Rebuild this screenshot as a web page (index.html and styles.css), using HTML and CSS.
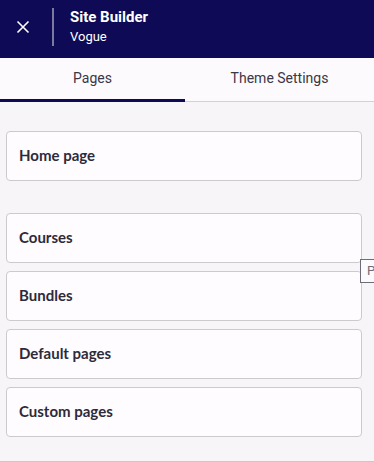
FILE: index.html
```html
<!DOCTYPE html>
<html lang="en">
<head>
    <meta charset="UTF-8">
    <meta name="viewport" content="width=device-width, initial-scale=1.0">
    <title>Site Builder</title>
    <link rel="stylesheet" href="styles.css">
</head>
<body>
    <div id="builder">
        <header id="top-bar">
            <button id="close-btn" aria-label="Close">
                <svg width="14" height="14" viewBox="0 0 14 14">
                    <path d="M1.5 1.5 L12.5 12.5 M12.5 1.5 L1.5 12.5" stroke="#ffffff" stroke-width="1.6" fill="none"/>
                </svg>
            </button>
            <div class="divider"></div>
            <div class="site-info">
                <div class="site-title">Site Builder</div>
                <div class="site-name">Vogue</div>
            </div>
        </header>

        <nav id="tabs">
            <div class="tab active">Pages</div>
            <div class="tab">Theme Settings</div>
        </nav>

        <main id="page-list">
            <div class="page-group">
                <div class="page-item">Home page</div>
            </div>
            <div class="page-group">
                <div class="page-item">Courses</div>
                <div class="page-item">Bundles</div>
                <div class="page-item">Default pages</div>
                <div class="page-item">Custom pages</div>
            </div>
            <div id="tooltip">P</div>
        </main>
    </div>
</body>
</html>
```

FILE: styles.css
```css
body {
    margin: 0;
    background-color: #f7f5f8;
    font-family: 'Roboto', sans-serif;
    color: #2d2a3a;
}

#builder {
    width: 374px;
    height: 462px;
    display: flex;
    flex-direction: column;
    overflow: hidden;
    box-sizing: border-box;
    border-bottom: 1px solid #c9c7cc;
}

/* Header */
#top-bar {
    display: flex;
    align-items: center;
    height: 58px;
    background-color: #0f0a55;
    color: #ffffff;
}

#close-btn {
    width: 46px;
    height: 58px;
    padding: 0 0 4px 0;
    background: transparent;
    border: none;
    display: flex;
    align-items: center;
    justify-content: center;
    cursor: pointer;
}

.divider {
    width: 2px;
    height: 38px;
    margin: 0 16px 4px 6px;
    background-color: #7c7a9c;
}

.site-info {
    display: flex;
    flex-direction: column;
    gap: 3px;
    margin-bottom: 4px;
}

.site-title {
    font-size: 15px;
    font-weight: bold;
    line-height: 17px;
}

.site-name {
    font-size: 13px;
    line-height: 16px;
}

/* Tabs */
#tabs {
    display: flex;
    height: 44px;
    background-color: #fcfafc;
    border-bottom: 1px solid #d3d1d6;
    box-sizing: border-box;
}

.tab {
    flex: 1;
    display: flex;
    align-items: center;
    justify-content: center;
    padding-bottom: 4px;
    font-size: 14px;
    color: #3a3748;
    box-sizing: border-box;
}

.tab.active {
    flex: 0 0 185px;
    border-bottom: 3px solid #0f0a55;
    margin-bottom: -1px;
    padding-bottom: 1px;
}

/* Page list */
#page-list {
    position: relative;
    display: flex;
    flex-direction: column;
    gap: 32px;
    padding: 29px 12px 0 6px;
}

.page-group {
    display: flex;
    flex-direction: column;
    gap: 8px;
}

.page-item {
    height: 50px;
    box-sizing: border-box;
    display: flex;
    align-items: center;
    padding: 0 12px 2px;
    background-color: #fefcfe;
    border: 1px solid #cccacf;
    border-radius: 4px;
    font-family: 'Lato', sans-serif;
    font-weight: bold;
    font-size: 15px;
    color: #2d2a3a;
}

#tooltip {
    position: absolute;
    left: 360px;
    top: 157px;
    width: 30px;
    height: 24px;
    box-sizing: border-box;
    padding: 3px 0 0 6px;
    background-color: #fbfafc;
    border: 1px solid #6e6c78;
    font-family: 'Roboto', sans-serif;
    font-size: 13px;
    color: #6e6c78;
}
```
